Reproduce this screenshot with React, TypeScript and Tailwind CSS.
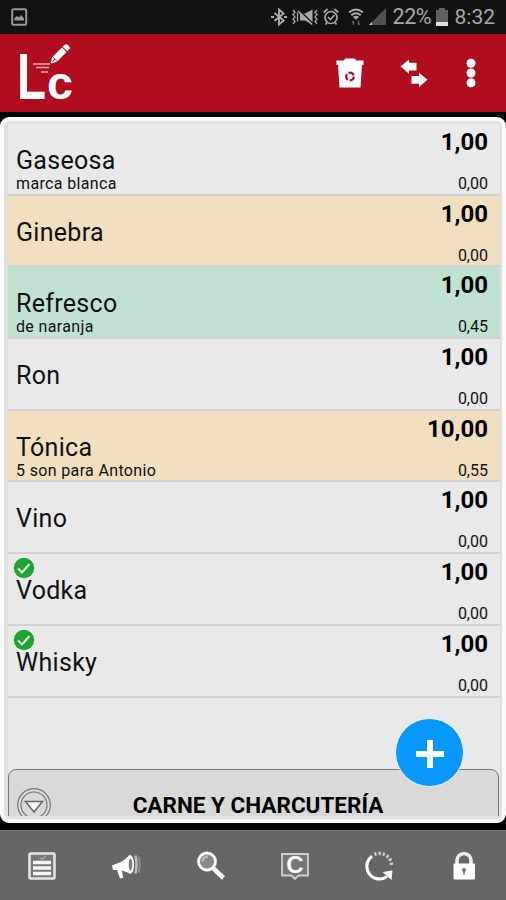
import React from 'react';

type Item = {
  name: string;
  note?: string;
  qty: string;
  price: string;
  color?: 'sand' | 'mint';
  done?: boolean;
};

const items: Item[] = [
  { name: 'Gaseosa', note: 'marca blanca', qty: '1,00', price: '0,00' },
  { name: 'Ginebra', qty: '1,00', price: '0,00', color: 'sand' },
  { name: 'Refresco', note: 'de naranja', qty: '1,00', price: '0,45', color: 'mint' },
  { name: 'Ron', qty: '1,00', price: '0,00' },
  { name: 'Tónica', note: '5 son para Antonio', qty: '10,00', price: '0,55', color: 'sand' },
  { name: 'Vino', qty: '1,00', price: '0,00' },
  { name: 'Vodka', qty: '1,00', price: '0,00', done: true },
  { name: 'Whisky', qty: '1,00', price: '0,00', done: true },
];

const rowColors = {
  sand: 'bg-[#f1dfc0]',
  mint: 'bg-[#c1e1d1]',
  plain: 'bg-[#e9e9e9]',
};

const StatusBar = () => (
  <div className="flex h-[34px] shrink-0 items-center bg-[#121212] pl-[11px] pr-[11px] text-[#a9a9a9]">
    <svg width="17" height="18" viewBox="0 0 17 18">
      <rect x="1.2" y="1.2" width="14" height="15.6" rx="1.5" fill="none" stroke="#9a9a9a" strokeWidth="2" />
      <path d="M3.5 12.5V10l2.5-2 2 1.5 2-2.5 3 3.5v2z" fill="#9a9a9a" />
    </svg>
    <div className="ml-auto flex items-center">
      {/* Bluetooth */}
      <svg width="16" height="18" viewBox="0 0 16 18" fill="none" stroke="currentColor" strokeWidth="1.9">
        <path d="M3.5 5l9 7.5-4.5 4V1.5l4.5 4-9 7.500" />
        <path d="M0 9h3M13 9h3" strokeWidth="2" />
      </svg>
      {/* Vibrate / mute */}
      <svg className="ml-[5px]" width="26" height="18" viewBox="0 0 26 18" fill="none" stroke="currentColor" strokeWidth="1.3">
        <path d="M1 2l2 2.300L1 6.600l2 2.300-2 2.300 2 2.300-2 2.300M5.500 4.500v9M25 2l-2 2.300 2 2.300-2 2.300 2 2.300-2 2.300 2 2.300" />
        <path d="M8 5.500h5L20.500 1.500v15L13 12.500H8z" fill="currentColor" stroke="none" />
        <path d="M7 2l14 13.500" stroke="#121212" strokeWidth="1.500" />
        <path d="M6 3l14 13.500" strokeWidth="1.600" />
      </svg>
      {/* Alarm */}
      <svg className="ml-[5px]" width="16" height="18" viewBox="0 0 16 18" fill="none" stroke="currentColor" strokeWidth="1.7">
        <circle cx="8" cy="9.500" r="6" />
        <path d="M.7 4.500L4.500 1M15.300 4.500L11.500 1M5 9l2.500 2.500L11.500 7M4 14.500l-1.500 2M12 14.500l1.500 2" />
      </svg>
      {/* Wifi */}
      <svg className="ml-[9px]" width="16" height="18" viewBox="0 0 16 18" fill="none" stroke="currentColor" strokeWidth="1.9">
        <path d="M1 4.500q7-6 14 0M3.300 7.200q4.700-4 9.400 0M5.700 9.700q2.300-1.800 4.600 0" />
        <path d="M5.500 8.500h5L8 12z" fill="currentColor" stroke="none" />
        <path d="M5.500 17v-4M4 14.500L5.500 13M10.500 12.500v4.500M12 15.500L10.500 17" stroke="#606060" strokeWidth="1.300" />
      </svg>
      {/* Signal */}
      <svg className="ml-[5px]" width="18" height="18" viewBox="0 0 18 18">
        <path d="M0 17L17 0v17z" fill="#505050" />
        <path d="M0 17l3-3v3z" fill="#c4c4c4" />
      </svg>
      <span className="ml-[6px] w-[39px] whitespace-nowrap text-[21.5px] leading-6 tracking-[-0.4px]">22%</span>
      <svg className="ml-[4px]" width="12" height="18" viewBox="0 0 12 18">
        <path d="M3 0h6v2h3v16H0V2h3z" fill="#606060" />
        <path d="M0 14h12v4H0z" fill="#e0e0e0" />
      </svg>
      <span className="ml-[7px] text-[21px] leading-6">8:32</span>
    </div>
  </div>
);

const Logo = () => (
  <svg className="overflow-visible" width="60" height="60" viewBox="0 0 60 60" fill="#fff">
    <text x="-1" y="55.500" fontFamily="Liberation Sans" fontWeight="700" fontSize="64" textLength="29" lengthAdjust="spacingAndGlyphs">L</text>
    <text x="29" y="55.500" fontFamily="Liberation Sans" fontWeight="700" fontSize="47" textLength="26" lengthAdjust="spacingAndGlyphs">c</text>
    <g transform="translate(32.500 20.500) rotate(-45)">
      <path d="M0 0l6-3.500v7z" />
      <path d="M6.500-3.300H19.500v6.600H6.500zM20.500-3.300h2.500q2.500 0 2.500 3.300t-2.500 3.300h-2.500z" />
      <path d="M2.500 0h4" stroke="#b00d1e" strokeWidth="1" />
    </g>
    <path d="M15 21h17M18 24.500h13M23 29h7" stroke="#eda7ad" strokeWidth="1.300" />
  </svg>
);

const Header = () => (
  <header className="flex h-[78px] shrink-0 items-center bg-[#b00d1e] pl-[18px] pr-[29px]">
    <Logo />
    <div className="ml-auto flex items-center">
      <svg width="28" height="30" viewBox="0 0 28 30">
        <path d="M.5 2.500h7.500Q8.500.5 10 .5h8q1.500 0 2 2h7.500v4.500h-1.500L24.500 29.500h-21L2 7H.5z" fill="#fff" />
        <circle cx="14" cy="18.500" r="3.800" fill="none" stroke="#b00d1e" strokeWidth="2.300" strokeDasharray="6.200 1.760" />
      </svg>
      <svg className="ml-[36px]" width="28" height="28" viewBox="0 0 28 28" fill="#fff">
        <path d="M.5 7.500L9 .5v3.200h7.500v7.800H9v3.200zM27.500 20.800L19 13.700v3.200h-7.500v7.800H19v3.200z" />
      </svg>
      <svg className="ml-[37px]" width="12" height="30" viewBox="0 0 12 30" fill="#fff">
        <circle cx="6" cy="5.300" r="4.500" />
        <circle cx="6" cy="15" r="4.500" />
        <circle cx="6" cy="24.700" r="4.500" />
      </svg>
    </div>
  </header>
);

const ItemRow: React.FC<{ item: Item }> = ({ item }) => (
  <li
    className={`relative flex h-[71.7px] shrink-0 justify-between border-b-2 border-[#d2d2d2] pl-[8px] pr-[12px] text-[#111] ${rowColors[item.color ?? 'plain']}`}
  >
    {item.done && (
      <svg className="absolute left-[5px] top-[3px]" width="22" height="22" viewBox="0 0 22 22">
        <circle cx="11" cy="11" r="10.200" fill="#20a335" />
        <path d="M5 11.500l4 4 7.500-8.500" fill="none" stroke="#d6f3da" strokeWidth="2.200" />
      </svg>
    )}
    <div className="flex flex-col pt-[23px]">
      <span className="text-[25px] leading-[28px] tracking-[0.3px]">{item.name}</span>
      {item.note && <span className="text-[16px] leading-[18px] tracking-[0.35px]">{item.note}</span>}
    </div>
    <div className="flex flex-col items-end pt-[4px]">
      <span className="text-[24px] font-bold leading-[28px] text-black">{item.qty}</span>
      <span className="mt-[19px] text-[16px] leading-[18px]">{item.price}</span>
    </div>
  </li>
);

const BottomBar = () => (
  <nav className="flex h-[70px] shrink-0 items-center justify-around border-t border-[#777] bg-[#666]">
    {/* List */}
    <svg width="30" height="30" viewBox="0 0 30 30">
      <rect x="2.500" y="2.500" width="25" height="25" rx="1" fill="#777" stroke="#e6e6e6" strokeWidth="2.500" />
      <path d="M6 11.500h18M6 17h18M6 22.500h18" stroke="#f5f5f5" strokeWidth="3.600" />
      <path d="M13 7l2 1.500L19 5" fill="none" stroke="#aaa" strokeWidth="1.200" />
    </svg>
    {/* Megaphone */}
    <svg width="30" height="30" viewBox="0 0 30 30">
      <path d="M1 14.500l10-4L18 5q4 9 0 17l-7-2.500 1 7.500-3 .5-3-8.500L2 19z" fill="#fff" />
      <ellipse cx="19" cy="13.500" rx="4" ry="9.500" fill="#fff" />
      <ellipse cx="19.500" cy="13.500" rx="1.800" ry="6" fill="#777" />
      <path d="M24.500 4.500q2 9 0 18" fill="none" stroke="#bbb" strokeWidth="2.500" />
      <path d="M27.500 5.500q2.500 8 0 16" fill="none" stroke="#909090" strokeWidth="2" />
    </svg>
    {/* Search */}
    <svg width="30" height="30" viewBox="0 0 30 30">
      <path d="M17 17l10.500 10" stroke="#f7f7f7" strokeWidth="4.500" />
      <circle cx="11" cy="10.500" r="8.500" fill="#8a8a8a" stroke="#fff" strokeWidth="2.800" />
      <path d="M6.500 10.500q.5-5 5.500-5" fill="none" stroke="#b5b5b5" strokeWidth="2.500" />
    </svg>
    {/* C note */}
    <svg width="30" height="30" viewBox="0 0 30 30">
      <path d="M2 3h26v21.500h-9.500L15 28l-3.500-3.500H2z" fill="#777" stroke="#d0d0d0" strokeWidth="1.800" />
      <text x="15" y="22" textAnchor="middle" fontFamily="Liberation Sans" fontWeight="700" fontSize="24" fill="#fff">C</text>
    </svg>
    {/* Refresh */}
    <svg width="30" height="30" viewBox="0 0 30 30" fill="none" stroke="#fff">
      <path d="M8 5.200A12 12 0 0 0 23 25.500" strokeWidth="3.200" />
      <path d="M10.500 3.500A12 12 0 0 1 27.500 14" stroke="#d0d0d0" strokeWidth="3.500" strokeDasharray="2.200 2" />
      <path d="M18.500 21l10-1.500-1 9.500z" fill="#fff" stroke="none" />
    </svg>
    {/* Lock */}
    <svg width="30" height="30" viewBox="0 0 30 30">
      <path d="M8 14V9.500a7 7 0 0 1 14 0V14" fill="none" stroke="#eee" strokeWidth="3.600" />
      <rect x="4.500" y="12.500" width="21.500" height="16" rx="1" fill="#fff" />
      <circle cx="15" cy="19" r="2" fill="#777" />
      <path d="M15 19v4.500" stroke="#777" strokeWidth="1.600" />
    </svg>
  </nav>
);

export default function App() {
  return (
    <div className="relative flex h-[900px] w-[506px] flex-col overflow-hidden bg-black font-['Roboto',sans-serif]">
      <StatusBar />
      <Header />

      {/* Shopping list */}
      <main className="mb-[7px] mt-[5px] flex min-h-0 flex-1 flex-col overflow-hidden rounded-[9px] border-4 border-[#fafafa] bg-[#e0e0e0] pb-[3px] pl-[4px] pr-[2px] pt-[3px]">
        <ul className="flex shrink-0 flex-col">
          {items.map((item) => (
            <ItemRow key={item.name} item={item} />
          ))}
        </ul>
        <div className="flex min-h-0 flex-1 flex-col overflow-hidden bg-[#e9e9e9] pt-[71px]">
          <div className="relative mr-px flex h-[72px] shrink-0 items-center justify-center rounded-[8px] border-[1.5px] border-[#777] bg-[#d9d9d9]">
            <svg className="absolute left-[7px] top-[17px]" width="36" height="36" viewBox="0 0 36 36" fill="none" stroke="#666">
              <circle cx="18" cy="18" r="16.300" stroke="#777" strokeWidth="1.200" />
              <circle cx="18" cy="18" r="13" stroke="#777" strokeWidth="1.200" />
              <path d="M9.500 14.500h17L18 25z" fill="#f5f5f5" strokeWidth="1.500" />
            </svg>
            <span className="pl-[9px] pt-px text-[22.5px] font-bold leading-6 text-black">CARNE Y CHARCUTERÍA</span>
          </div>
        </div>
      </main>

      <BottomBar />

      {/* Floating add button */}
      <button className="absolute left-[395px] top-[718px] flex h-[69px] w-[69px] items-center justify-center rounded-full border border-[#eef4f8] bg-[#0698fd]">
        <svg className="mt-[3px]" width="30" height="30" viewBox="0 0 30 30">
          <path d="M15 1v28M1 15h28" stroke="#fff" strokeWidth="6" />
        </svg>
      </button>
    </div>
  );
}
